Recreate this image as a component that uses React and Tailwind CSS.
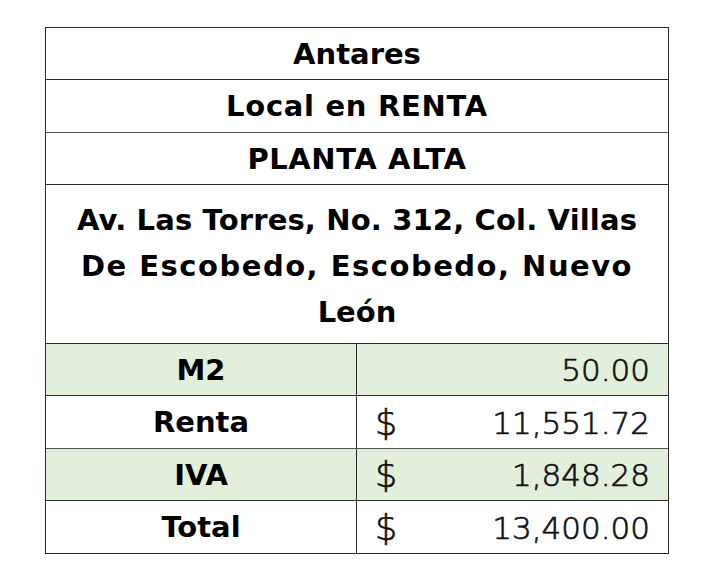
import React from 'react';

const rows = [
  { label: 'M2', value: '50.00', green: true, currency: false },
  { label: 'Renta', value: '11,551.72', green: false, currency: true },
  { label: 'IVA', value: '1,848.28', green: true, currency: true },
  { label: 'Total', value: '13,400.00', green: false, currency: true },
];

export default function App() {
  return (
    <div className="w-[720px] h-[572px] bg-white pt-[27px] pl-[45px] text-black" style={{ fontFamily: '"DejaVu Sans", sans-serif' }}>
      <div className="w-[624px] border border-[#2a2a2a] flex flex-col">
        <div className="h-[52px] border-b border-[#2a2a2a] flex items-center justify-center pt-[2px] text-[29px] font-bold">
          Antares
        </div>
        <div className="h-[53px] border-b border-[#555] flex items-center justify-center pt-[2px] text-[29px] font-bold tracking-[0.7px]">
          Local en RENTA
        </div>
        <div className="h-[52px] border-b border-[#2a2a2a] flex items-center justify-center pt-[2px] text-[29px] font-bold tracking-[0.6px]">
          PLANTA ALTA
        </div>
        <div className="h-[159px] border-b border-[#2a2a2a] flex items-center justify-center pt-[4px] text-[29px] leading-[46px] font-bold text-center">
          <p>
            <span className="tracking-[0.15px]">Av. Las Torres, No. 312, Col. Villas</span>
            <br />
            <span className="tracking-[1.5px]">De Escobedo, Escobedo, Nuevo</span>
            <br />
            León
          </p>
        </div>
        {rows.map((r, i) => (
          <div
            key={r.label}
            className={`grid grid-cols-[311px_1fr] ${i === 3 ? 'h-[52px]' : i === 1 ? 'h-[53px] border-b border-[#555]' : 'h-[52px] border-b border-[#2a2a2a]'} ${r.green ? 'bg-[#e2efda]' : 'bg-white'}`}
          >
            <div className="border-r border-[#2a2a2a] flex items-center justify-center pt-[2px] text-[29px] font-bold">
              {r.label}
            </div>
            <div className="flex items-center justify-between pl-[18px] pr-[18px] pt-[2px] text-[31px] font-extralight text-[#111] [-webkit-text-stroke:0.7px_#111]">
              <span className="text-[35px] leading-none">{r.currency ? '$' : ''}</span>
              <span>{r.value}</span>
            </div>
          </div>
        ))}
      </div>
    </div>
  );
}
